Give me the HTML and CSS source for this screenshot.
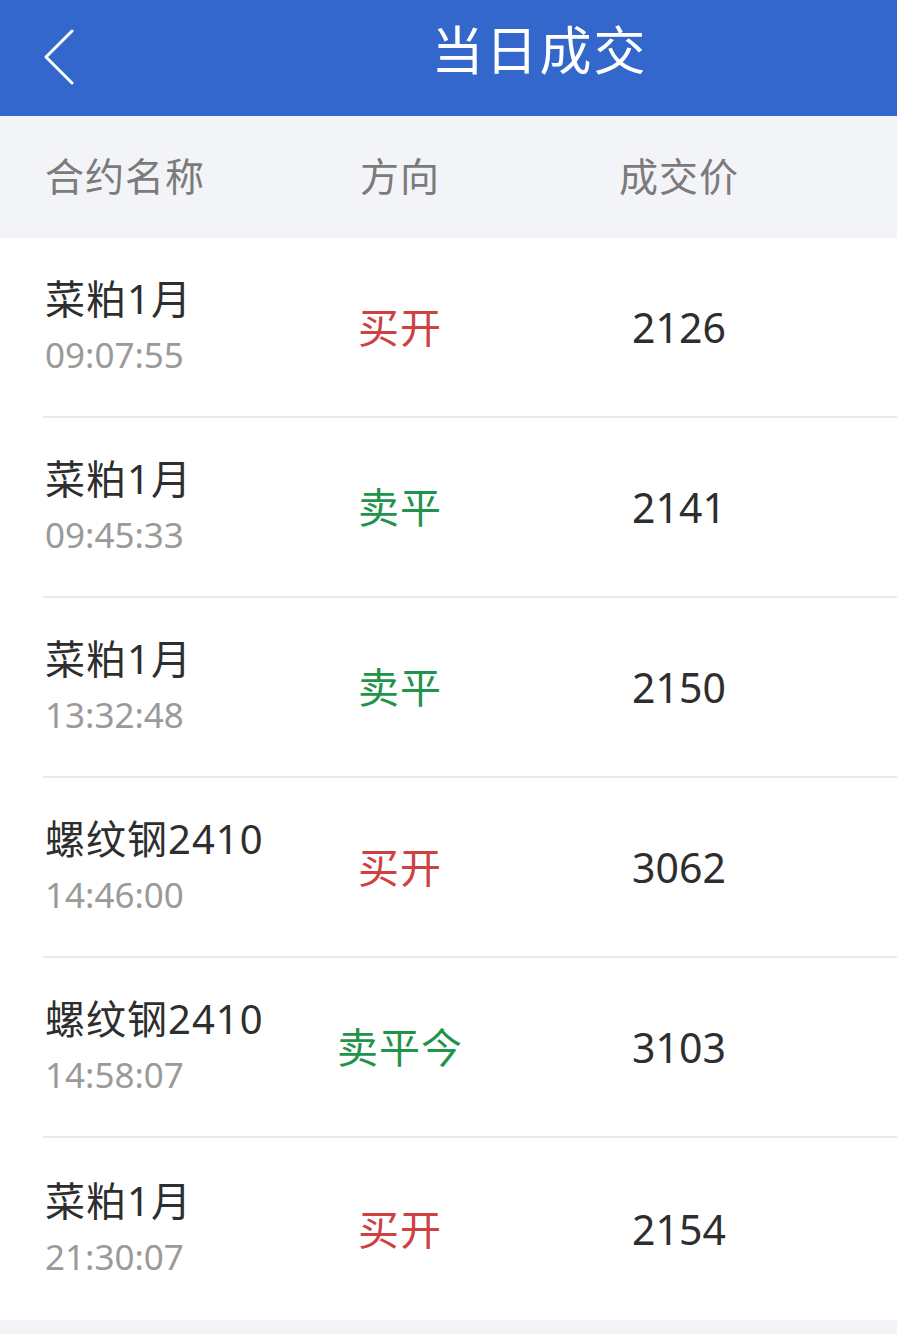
FILE: index.html
```html
<!DOCTYPE html>
<html lang="zh-CN">
<head>
<meta charset="utf-8">
<title>当日成交</title>
<link rel="stylesheet" href="styles.css">
</head>
<body>
<div class="page">
  <header class="topbar">
    <span class="back">
      <svg width="34" height="56" viewBox="0 0 34 56"><path d="M30 2 L4 28 L30 54" fill="none" stroke="#ffffff" stroke-width="3" stroke-linecap="round" stroke-linejoin="round"/></svg>
    </span>
    <h1 class="title">当日成交</h1>
  </header>
  <div class="thead">
    <div class="c1">合约名称</div>
    <div class="c2">方向</div>
    <div class="c3">成交价</div>
  </div>
  <div class="list">
    <div class="row">
      <div class="c1"><div class="name">菜粕1月</div><div class="time">09:07:55</div></div>
      <div class="c2 buy">买开</div>
      <div class="c3 price">2126</div>
    </div>
    <div class="row">
      <div class="c1"><div class="name">菜粕1月</div><div class="time">09:45:33</div></div>
      <div class="c2 sell">卖平</div>
      <div class="c3 price">2141</div>
    </div>
    <div class="row">
      <div class="c1"><div class="name">菜粕1月</div><div class="time">13:32:48</div></div>
      <div class="c2 sell">卖平</div>
      <div class="c3 price">2150</div>
    </div>
    <div class="row">
      <div class="c1"><div class="name">螺纹钢2410</div><div class="time">14:46:00</div></div>
      <div class="c2 buy">买开</div>
      <div class="c3 price">3062</div>
    </div>
    <div class="row">
      <div class="c1"><div class="name">螺纹钢2410</div><div class="time">14:58:07</div></div>
      <div class="c2 sell">卖平今</div>
      <div class="c3 price">3103</div>
    </div>
    <div class="row last">
      <div class="c1"><div class="name">菜粕1月</div><div class="time">21:30:07</div></div>
      <div class="c2 buy">买开</div>
      <div class="c3 price">2154</div>
    </div>
  </div>
  <div class="footer"></div>
</div>
</body>
</html>
```
FILE: styles.css
```css
* { box-sizing: border-box; }
html, body {
  margin: 0;
  padding: 0;
  background: #ffffff;
}
body {
  font-family: "Noto Sans CJK SC", "Noto Sans", sans-serif;
  width: 897px;
  height: 1334px;
  overflow: hidden;
}
.page {
  display: flex;
  flex-direction: column;
  height: 1334px;
}
.topbar {
  height: 116px;
  background: #3367cc;
  display: flex;
  align-items: center;
  padding-left: 42px;
}
.back {
  display: flex;
  width: 34px;
  height: 56px;
  margin-top: -2px;
}
.title {
  margin: 0;
  flex: 1;
  text-align: center;
  color: #ffffff;
  font-size: 52px;
  font-weight: 400;
  letter-spacing: 2px;
  padding-left: 126px;
  padding-right: 20px;
  line-height: 1;
  margin-top: -20px;
}
.thead, .row {
  display: grid;
  grid-template-columns: 255px 200px 358px;
  padding-left: 45px;
  align-items: center;
}
.thead {
  height: 122px;
  background: #f3f4f8;
  color: #7b7b7b;
  font-size: 39px;
  letter-spacing: 1px;
  padding-bottom: 6px;
}
.thead .c2, .thead .c3 { text-align: center; }
.list {
  display: flex;
  flex-direction: column;
}
.row {
  height: 180px;
  border-bottom: 2px solid #e8e8ea;
  margin-left: 43px;
  padding-left: 2px;
}
.row.last {
  border-bottom: none;
  height: 182px;
}
.c2, .c3 { text-align: center; }
.name {
  font-size: 40px;
  color: #2e2e2e;
  line-height: 54px;
  white-space: nowrap;
  font-family: "Noto Sans", "Noto Sans CJK SC", sans-serif;
  letter-spacing: 1px;
}
.time {
  font-size: 35px;
  color: #9a9a9a;
  line-height: 54px;
  margin-top: 2px;
  font-family: "Noto Sans", sans-serif;
}
.buy, .sell {
  font-size: 41px;
  letter-spacing: 1px;
  padding-bottom: 4px;
}
.buy { color: #cf4141; }
.sell { color: #1f944b; }
.price {
  font-size: 41px;
  color: #2e2e2e;
  font-family: "Noto Sans", "Noto Sans CJK SC", sans-serif;
}
.footer {
  flex: 1;
  background: #f3f4f8;
}
```
